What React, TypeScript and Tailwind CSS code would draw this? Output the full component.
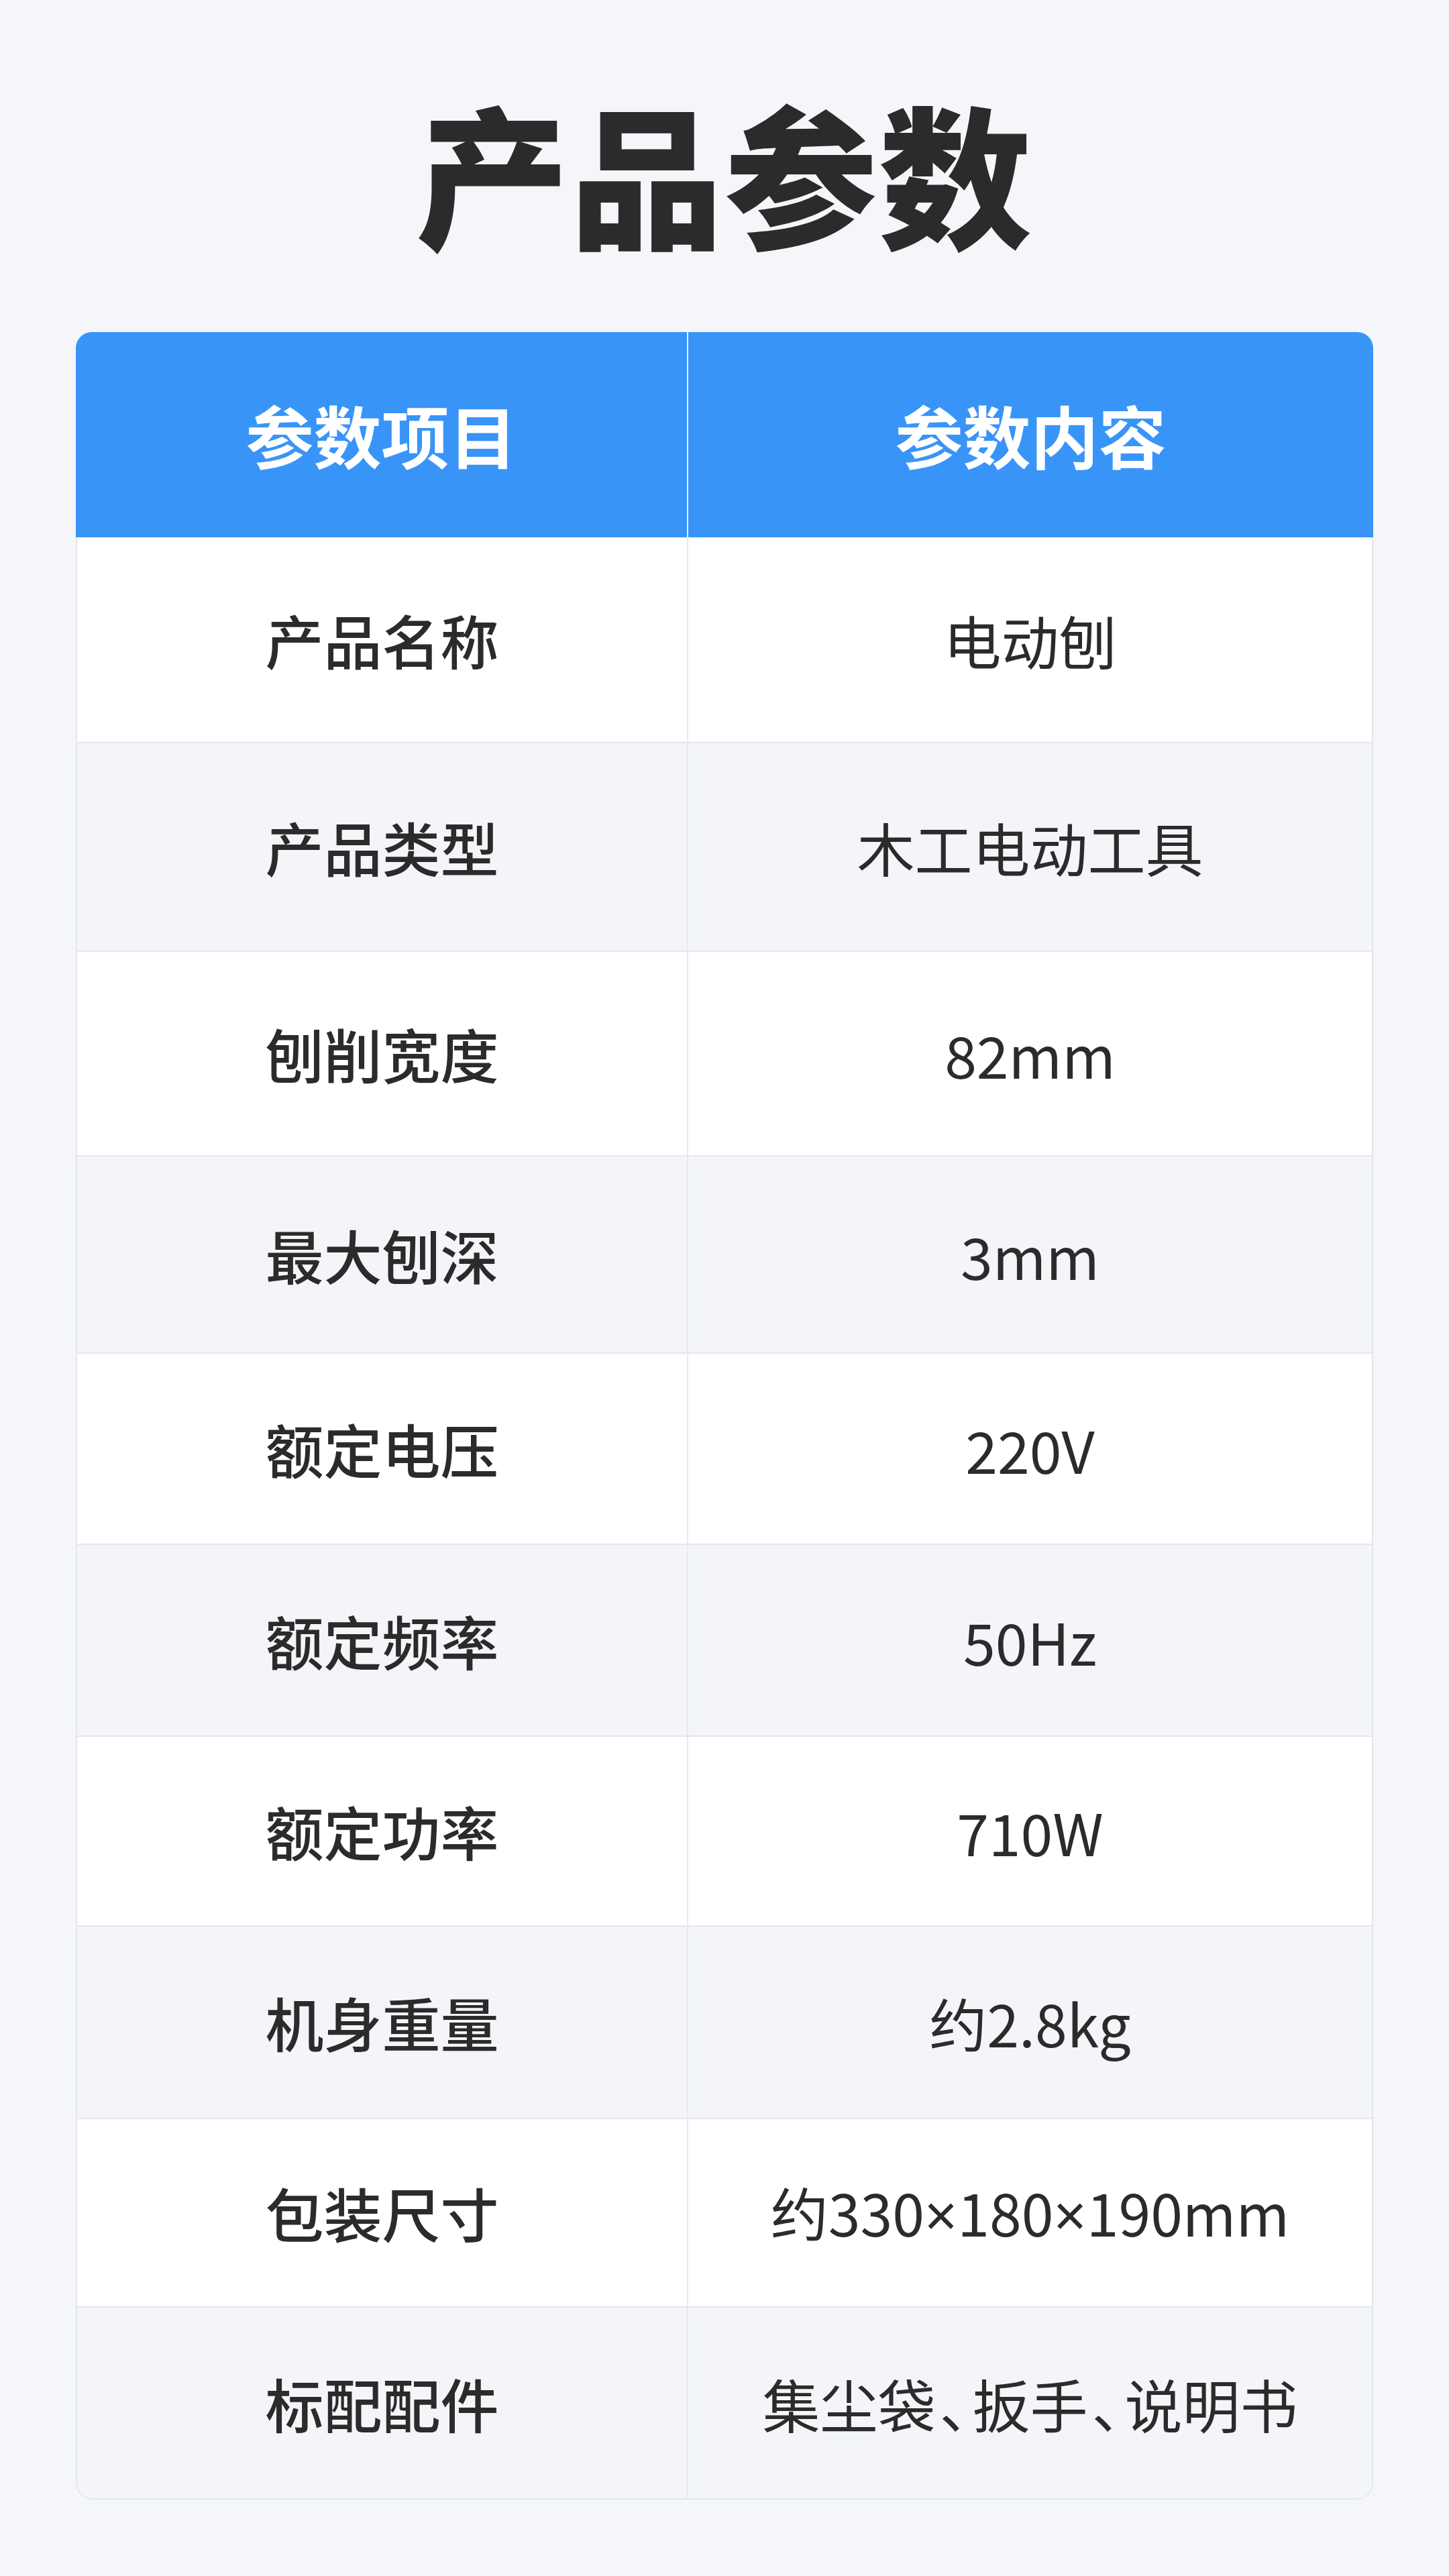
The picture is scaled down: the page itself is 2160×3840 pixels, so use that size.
const rows = [
  { name: '产品名称', value: '电动刨', h: 'h-[307px]', bg: 'bg-white' },
  { name: '产品类型', value: '木工电动工具', h: 'h-[311px]', bg: 'bg-[#f3f5f9]' },
  { name: '刨削宽度', value: '82mm', h: 'h-[305px]', bg: 'bg-white' },
  { name: '最大刨深', value: '3mm', h: 'h-[294px]', bg: 'bg-[#f3f5f9]' },
  { name: '额定电压', value: '220V', h: 'h-[285px]', bg: 'bg-white' },
  { name: '额定频率', value: '50Hz', h: 'h-[286px]', bg: 'bg-[#f3f5f9]' },
  { name: '额定功率', value: '710W', h: 'h-[283px]', bg: 'bg-white' },
  { name: '机身重量', value: '约2.8kg', h: 'h-[287px]', bg: 'bg-[#f3f5f9]' },
  { name: '包装尺寸', value: '约330×180×190mm', h: 'h-[281px]', bg: 'bg-white' },
  { name: '标配配件', value: '集尘袋、扳手、说明书', h: 'h-[284px]', bg: 'bg-[#f3f5f9]' },
];

// × 用窄的西文字形，顿号用半角字形
function Value({ text }: { text: string }) {
  const parts = text.split(/([×、])/);
  return (
    <span>
      {parts.map((p, i) =>
        p === '×' ? (
          <span key={i} style={{ fontFamily: '"Noto Sans", sans-serif' }}>
            ×
          </span>
        ) : p === '、' ? (
          <span key={i} className="px-[6px] [font-feature-settings:'halt']">
            、
          </span>
        ) : (
          <span key={i}>{p}</span>
        )
      )}
    </span>
  );
}

export default function App() {
  return (
    <div
      className="w-[2160px] h-[3840px] bg-[#f4f6fa] flex flex-col items-center text-[#2b2b2b]"
      style={{ fontFamily: '"Noto Sans CJK SC", "Noto Sans", sans-serif' }}
    >
      {/* 标题 */}
      <h1 className="mt-[141px] text-[228px] leading-none font-black tracking-[2px]">
        产品参数
      </h1>

      {/* 参数表 */}
      <div className="mt-[126px] w-[1934px] rounded-[24px] overflow-hidden">
        <div className="h-[306px] grid grid-cols-[913px_1fr] bg-[#3994f8] text-white text-[101px] font-bold">
          <div className="flex items-center justify-center border-r-2 border-white/90">参数项目</div>
          <div className="flex items-center justify-center">参数内容</div>
        </div>

        <div className="border-x-2 border-b-2 border-[#e3e7ed] rounded-b-[24px] overflow-hidden divide-y-2 divide-[#e3e7ed]">
          {rows.map((r) => (
            <div key={r.name} className={`grid grid-cols-[911px_1fr] ${r.h} ${r.bg}`}>
              <div className="flex items-center justify-center border-r-2 border-[#e6e9ee] text-[87px] font-medium">
                {r.name}
              </div>
              <div className="flex items-center justify-center text-[86px]">
                <Value text={r.value} />
              </div>
            </div>
          ))}
        </div>
      </div>
    </div>
  );
}
